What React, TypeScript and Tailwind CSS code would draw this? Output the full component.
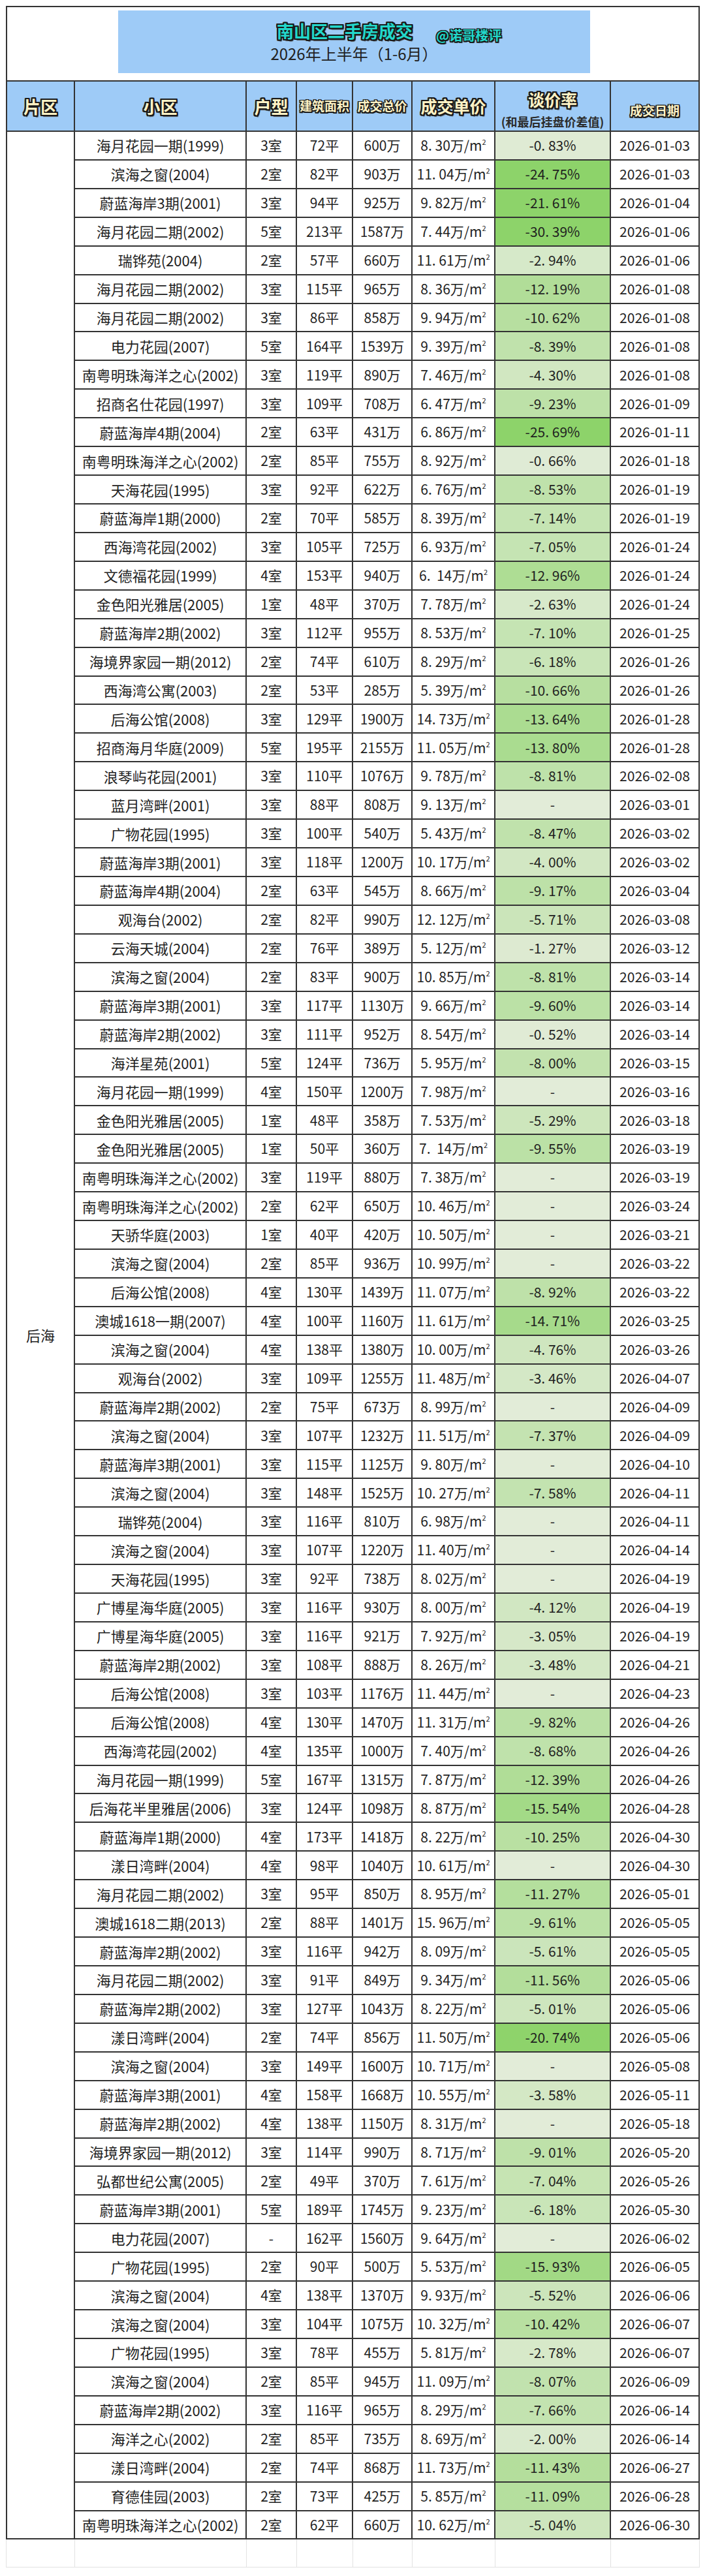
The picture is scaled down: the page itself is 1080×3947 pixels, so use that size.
import React from "react";

const raw = `海月花园一期(1999)|3室|72平|600万|8.30|-0.83|2026-01-03
滨海之窗(2004)|2室|82平|903万|11.04|-24.75|2026-01-03
蔚蓝海岸3期(2001)|3室|94平|925万|9.82|-21.61|2026-01-04
海月花园二期(2002)|5室|213平|1587万|7.44|-30.39|2026-01-06
瑞铧苑(2004)|2室|57平|660万|11.61|-2.94|2026-01-06
海月花园二期(2002)|3室|115平|965万|8.36|-12.19|2026-01-08
海月花园二期(2002)|3室|86平|858万|9.94|-10.62|2026-01-08
电力花园(2007)|5室|164平|1539万|9.39|-8.39|2026-01-08
南粤明珠海洋之心(2002)|3室|119平|890万|7.46|-4.30|2026-01-08
招商名仕花园(1997)|3室|109平|708万|6.47|-9.23|2026-01-09
蔚蓝海岸4期(2004)|2室|63平|431万|6.86|-25.69|2026-01-11
南粤明珠海洋之心(2002)|2室|85平|755万|8.92|-0.66|2026-01-18
天海花园(1995)|3室|92平|622万|6.76|-8.53|2026-01-19
蔚蓝海岸1期(2000)|2室|70平|585万|8.39|-7.14|2026-01-19
西海湾花园(2002)|3室|105平|725万|6.93|-7.05|2026-01-24
文德福花园(1999)|4室|153平|940万|6.  14|-12.96|2026-01-24
金色阳光雅居(2005)|1室|48平|370万|7.78|-2.63|2026-01-24
蔚蓝海岸2期(2002)|3室|112平|955万|8.53|-7.10|2026-01-25
海境界家园一期(2012)|2室|74平|610万|8.29|-6.18|2026-01-26
西海湾公寓(2003)|2室|53平|285万|5.39|-10.66|2026-01-26
后海公馆(2008)|3室|129平|1900万|14.73|-13.64|2026-01-28
招商海月华庭(2009)|5室|195平|2155万|11.05|-13.80|2026-01-28
浪琴屿花园(2001)|3室|110平|1076万|9.78|-8.81|2026-02-08
蓝月湾畔(2001)|3室|88平|808万|9.13||2026-03-01
广物花园(1995)|3室|100平|540万|5.43|-8.47|2026-03-02
蔚蓝海岸3期(2001)|3室|118平|1200万|10.17|-4.00|2026-03-02
蔚蓝海岸4期(2004)|2室|63平|545万|8.66|-9.17|2026-03-04
观海台(2002)|2室|82平|990万|12.12|-5.71|2026-03-08
云海天城(2004)|2室|76平|389万|5.12|-1.27|2026-03-12
滨海之窗(2004)|2室|83平|900万|10.85|-8.81|2026-03-14
蔚蓝海岸3期(2001)|3室|117平|1130万|9.66|-9.60|2026-03-14
蔚蓝海岸2期(2002)|3室|111平|952万|8.54|-0.52|2026-03-14
海洋星苑(2001)|5室|124平|736万|5.95|-8.00|2026-03-15
海月花园一期(1999)|4室|150平|1200万|7.98||2026-03-16
金色阳光雅居(2005)|1室|48平|358万|7.53|-5.29|2026-03-18
金色阳光雅居(2005)|1室|50平|360万|7.  14|-9.55|2026-03-19
南粤明珠海洋之心(2002)|3室|119平|880万|7.38||2026-03-19
南粤明珠海洋之心(2002)|2室|62平|650万|10.46||2026-03-24
天骄华庭(2003)|1室|40平|420万|10.50||2026-03-21
滨海之窗(2004)|2室|85平|936万|10.99||2026-03-22
后海公馆(2008)|4室|130平|1439万|11.07|-8.92|2026-03-22
澳城1618一期(2007)|4室|100平|1160万|11.61|-14.71|2026-03-25
滨海之窗(2004)|4室|138平|1380万|10.00|-4.76|2026-03-26
观海台(2002)|3室|109平|1255万|11.48|-3.46|2026-04-07
蔚蓝海岸2期(2002)|2室|75平|673万|8.99||2026-04-09
滨海之窗(2004)|3室|107平|1232万|11.51|-7.37|2026-04-09
蔚蓝海岸3期(2001)|3室|115平|1125万|9.80||2026-04-10
滨海之窗(2004)|3室|148平|1525万|10.27|-7.58|2026-04-11
瑞铧苑(2004)|3室|116平|810万|6.98||2026-04-11
滨海之窗(2004)|3室|107平|1220万|11.40||2026-04-14
天海花园(1995)|3室|92平|738万|8.02||2026-04-19
广博星海华庭(2005)|3室|116平|930万|8.00|-4.12|2026-04-19
广博星海华庭(2005)|3室|116平|921万|7.92|-3.05|2026-04-19
蔚蓝海岸2期(2002)|3室|108平|888万|8.26|-3.48|2026-04-21
后海公馆(2008)|3室|103平|1176万|11.44||2026-04-23
后海公馆(2008)|4室|130平|1470万|11.31|-9.82|2026-04-26
西海湾花园(2002)|4室|135平|1000万|7.40|-8.68|2026-04-26
海月花园一期(1999)|5室|167平|1315万|7.87|-12.39|2026-04-26
后海花半里雅居(2006)|3室|124平|1098万|8.87|-15.54|2026-04-28
蔚蓝海岸1期(2000)|4室|173平|1418万|8.22|-10.25|2026-04-30
漾日湾畔(2004)|4室|98平|1040万|10.61||2026-04-30
海月花园二期(2002)|3室|95平|850万|8.95|-11.27|2026-05-01
澳城1618二期(2013)|2室|88平|1401万|15.96|-9.61|2026-05-05
蔚蓝海岸2期(2002)|3室|116平|942万|8.09|-5.61|2026-05-05
海月花园二期(2002)|3室|91平|849万|9.34|-11.56|2026-05-06
蔚蓝海岸2期(2002)|3室|127平|1043万|8.22|-5.01|2026-05-06
漾日湾畔(2004)|2室|74平|856万|11.50|-20.74|2026-05-06
滨海之窗(2004)|3室|149平|1600万|10.71||2026-05-08
蔚蓝海岸3期(2001)|4室|158平|1668万|10.55|-3.58|2026-05-11
蔚蓝海岸2期(2002)|4室|138平|1150万|8.31||2026-05-18
海境界家园一期(2012)|3室|114平|990万|8.71|-9.01|2026-05-20
弘都世纪公寓(2005)|2室|49平|370万|7.61|-7.04|2026-05-26
蔚蓝海岸3期(2001)|5室|189平|1745万|9.23|-6.18|2026-05-30
电力花园(2007)|-|162平|1560万|9.64||2026-06-02
广物花园(1995)|2室|90平|500万|5.53|-15.93|2026-06-05
滨海之窗(2004)|4室|138平|1370万|9.93|-5.52|2026-06-06
滨海之窗(2004)|3室|104平|1075万|10.32|-10.42|2026-06-07
广物花园(1995)|3室|78平|455万|5.81|-2.78|2026-06-07
滨海之窗(2004)|2室|85平|945万|11.09|-8.07|2026-06-09
蔚蓝海岸2期(2002)|3室|116平|965万|8.29|-7.66|2026-06-14
海洋之心(2002)|2室|85平|735万|8.69|-2.00|2026-06-14
漾日湾畔(2004)|2室|74平|868万|11.73|-11.43|2026-06-27
育德佳园(2003)|2室|73平|425万|5.85|-11.09|2026-06-28
南粤明珠海洋之心(2002)|2室|62平|660万|10.62|-5.04|2026-06-30`;

const rows = raw.split("\n").map((l) => l.split("|"));

function green(rate: string): string {
  const L = [226, 236, 216];
  const S = [141, 211, 106];
  const t = rate ? Math.min(Math.abs(parseFloat(rate)) / 21, 1) : 0;
  const c = L.map((l, i) => Math.round(l + (S[i] - l) * t));
  return `rgb(${c[0]},${c[1]},${c[2]})`;
}

const fmtUnit = (u: string) => (u.includes(" ") ? u : u.replace(".", ". "));
const fmtRate = (r: string) => (r ? r.replace(".", ". ") + "%" : "-");

const outline =
  "[text-shadow:2px_0_0_#1a1a1a,-2px_0_0_#1a1a1a,0_2px_0_#1a1a1a,0_-2px_0_#1a1a1a,2px_2px_0_#1a1a1a,-2px_-2px_0_#1a1a1a,2px_-2px_0_#1a1a1a,-2px_2px_0_#1a1a1a,1px_2px_0_#1a1a1a,2px_1px_0_#1a1a1a,-1px_2px_0_#1a1a1a,-2px_1px_0_#1a1a1a,1px_-2px_0_#1a1a1a,2px_-1px_0_#1a1a1a,-1px_-2px_0_#1a1a1a,-2px_-1px_0_#1a1a1a,2px_3px_1px_#555]";
const outlineSm =
  "[text-shadow:1.5px_0_0_#1a1a1a,-1.5px_0_0_#1a1a1a,0_1.5px_0_#1a1a1a,0_-1.5px_0_#1a1a1a,1.5px_1.5px_0_#1a1a1a,-1.5px_-1.5px_0_#1a1a1a,1.5px_-1.5px_0_#1a1a1a,-1.5px_1.5px_0_#1a1a1a,2px_2px_1px_#555]";

const cell = "border-r-2 border-b-2 border-[#333] flex items-center justify-center whitespace-pre";
const head = "border-r-2 border-b-2 border-[#333] bg-[#9ecbf7] flex items-center justify-center font-bold text-[#fff3c6]";

export default function App() {
  return (
    <div className="w-[1080px] min-h-[3947px] bg-white pl-[9px] pt-[9px] font-['Noto_Sans_CJK_SC','Noto_Sans',sans-serif] text-[#1f1f1f]">
      <div className="w-[1063px] h-[114px] border-2 border-b-0 border-[#333] pl-[170px] pt-[5px]">
        <div className="w-[723px] h-[96px] bg-[#9ecbf7] flex flex-col pt-[15px]">
          <div className="flex h-[32px] items-start pl-[243px]">
            <span className={`text-[26px] leading-[32px] font-bold text-[#22d8cb] ${outline}`}>南山区二手房成交</span>
            <span className={`ml-[36px] mt-[9px] text-[20px] leading-[28px] font-bold text-[#22d8cb] ${outlineSm}`}>@诺哥楼评</span>
          </div>
          <div className="mt-[3px] h-[32px] text-[24px] leading-[32px] text-center text-[#222]">2026年上半年（1-6月）</div>
        </div>
      </div>

      <div className="grid w-[1063px] grid-cols-[104px_263px_77px_86px_91px_127px_177px_136px] grid-rows-[77px_repeat(84,43.93px)] border-l-2 border-t-2 border-[#333]">
        <div className={head}><span className={`text-[26px] ${outline}`}>片区</span></div>
        <div className={head}><span className={`text-[26px] ${outline}`}>小区</span></div>
        <div className={head}><span className={`text-[26px] ${outline}`}>户型</span></div>
        <div className={head}><span className={`text-[19px] ${outlineSm}`}>建筑面积</span></div>
        <div className={head}><span className={`text-[19px] ${outlineSm}`}>成交总价</span></div>
        <div className={head}><span className={`text-[25px] ${outline}`}>成交单价</span></div>
        <div className="border-r-2 border-b-2 border-[#333] bg-[#9ecbf7] flex flex-col items-center justify-end pb-[2px] gap-[8px] font-bold">
          <span className={`text-[25px] leading-[28px] text-[#fff3c6] ${outline}`}>谈价率</span>
          <span className="text-[18px] leading-[24px] text-[#2b2b2b]">(和最后挂盘价差值)</span>
        </div>
        <div className={`${head} pt-[13px]`}><span className={`text-[19px] ${outlineSm}`}>成交日期</span></div>

        <div className={`${cell} row-[span_84/span_84] text-[22px]`}>后海</div>

        {rows.map((r, i) => (
          <React.Fragment key={i}>
            <div className={`${cell} text-[22px]`}>{r[0]}</div>
            <div className={`${cell} text-[21px]`}>{r[1]}</div>
            <div className={`${cell} text-[21px]`}>{r[2]}</div>
            <div className={`${cell} text-[21px]`}>{r[3]}</div>
            <div className={`${cell} text-[21px]`}>
              <span>
                {fmtUnit(r[4])}万/m
                <sup className="text-[11px] top-[-9px]">2</sup>
              </span>
            </div>
            <div className={`${cell} text-[21px]`} style={{ backgroundColor: green(r[5]) }}>
              {fmtRate(r[5])}
            </div>
            <div className={`${cell} text-[21px]`}>{r[6]}</div>
          </React.Fragment>
        ))}
      </div>

      <div className="grid w-[1063px] h-[43px] grid-cols-[105px_263px_77px_86px_91px_127px_177px_136px] border-l border-[#e2e2e2]">
        {Array.from({ length: 8 }).map((_, i) => (
          <div key={i} className="border-r border-b border-[#e2e2e2]" />
        ))}
      </div>
    </div>
  );
}
